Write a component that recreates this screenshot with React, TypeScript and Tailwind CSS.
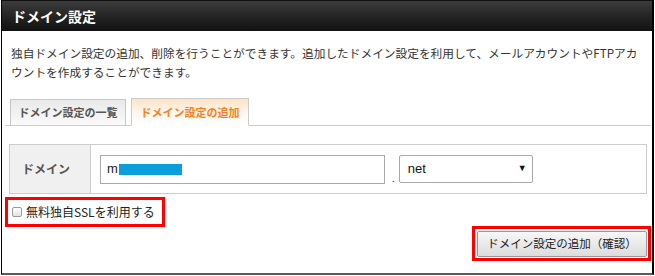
import React from "react";

const jp = { fontFamily: '"Noto Sans CJK JP", "Noto Sans", sans-serif' };

function Tabs() {
  return (
    <div className="ml-[3px] mr-px mt-[18px] flex h-[27px] items-end gap-[5px] border-b border-[#cccccc] pl-[5px]">
      <div className="-mb-px flex h-[27px] w-[116px] items-center justify-center border border-b-[#cccccc] border-[#c8c8c8] bg-gradient-to-b from-[#e9e9e9] to-[#fafafa] text-[11px] font-bold text-[#555555]">
        ドメイン設定の一覧
      </div>
      <div className="-mb-px flex h-[28px] w-[118px] items-center justify-center border border-[#cccccc] border-b-white bg-gradient-to-b from-[#ffe2c4] via-[#fff6ee] to-white text-[11px] font-bold text-[#f5821f]">
        ドメイン設定の追加
      </div>
    </div>
  );
}

function DomainRow() {
  return (
    <div className="ml-[7px] mt-[18px] flex h-[50px] w-[638px] border border-[#cccccc]">
      <div className="flex w-[81px] items-center border-r border-[#cccccc] bg-[#f0f0f0] pl-[12px] text-[12px] font-bold text-[#555555]">
        ドメイン
      </div>
      <div className="flex items-center pl-[9px]">
        <div className="flex h-[29px] w-[285px] items-center border border-[#a9a9a9] bg-white pl-[6px] text-[13px] text-[#222222]" style={{ fontFamily: '"Liberation Sans", Arial, sans-serif' }}>
          <span>m</span>
          <span className="ml-px h-[11px] w-[63px] bg-[#0a9edb]" />
        </div>
        <span className="ml-[7px] mt-[16px] text-[10px] text-[#333333]">.</span>
        <div className="ml-[4px] flex h-[28px] w-[134px] items-center justify-between rounded-[2px] border border-[#a9a9a9] bg-white pl-[8px] pr-[5px] text-[13px] text-[#111111]" style={{ fontFamily: '"Liberation Sans", Arial, sans-serif' }}>
          <span>net</span>
          <span className="text-[9px]">▼</span>
        </div>
      </div>
    </div>
  );
}

export default function App() {
  return (
    <div className="h-[276px] w-[655px] bg-white" style={jp}>
      <div className="ml-px flex h-[275px] w-[653px] flex-col border-b-2 border-l border-r-2 border-b-[#5a5a5a] border-l-black border-r-black">
        <div className="flex h-[31px] items-center border-t border-[#111111] bg-gradient-to-b from-[#3d3d3d] via-[#252525] to-[#121212] pl-[10px] text-[14px] font-bold text-white">
          ドメイン設定
        </div>
        <p className="whitespace-nowrap pl-[9px] pt-[12px] text-[11.7px] leading-[19px] text-[#333333]">
          独自ドメイン設定の追加、削除を行うことができます。追加したドメイン設定を利用して、メールアカウントやFTPアカ
          <br />
          ウントを作成することができます。
        </p>
        <Tabs />
        <DomainRow />
        <div className="ml-[3px] mt-[3px] flex h-[30px] w-[160px] items-center border-[3px] border-[#ff0000] pl-[4px]">
          <span className="h-[10px] w-[10px] rounded-[2px] border border-[#9a9a9a] bg-gradient-to-b from-white to-[#e4e4e4]" />
          <span className="ml-[4px] text-[12px] text-[#222222]">無料独自SSLを利用する</span>
        </div>
        <div className="mr-px -mt-px flex h-[35px] w-[179px] items-center self-end border-[3px] border-[#ff0000] pl-[2px]">
          <button className="h-[26px] w-[170px] rounded-[2px] border border-[#999999] bg-gradient-to-b from-[#f7f7f7] to-[#dcdcdc] text-[11.5px] text-[#222222]">
            ドメイン設定の追加（確認）
          </button>
        </div>
      </div>
    </div>
  );
}
